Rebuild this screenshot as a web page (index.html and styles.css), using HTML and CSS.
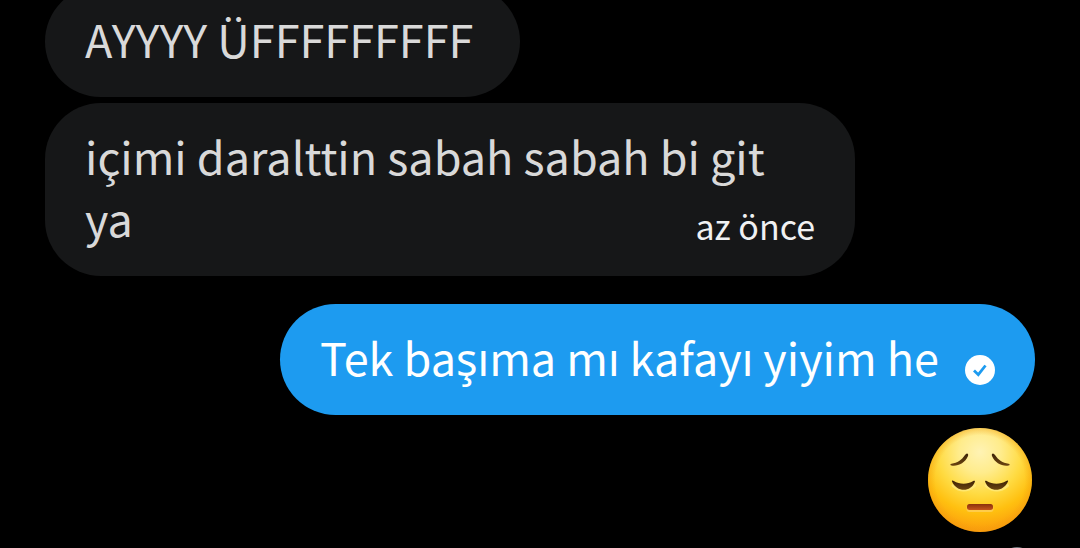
FILE: index.html
```
<!DOCTYPE html>
<html lang="tr">
<head>
  <meta charset="UTF-8">
  <meta name="viewport" content="width=device-width, initial-scale=1.0">
  <title>Mesajlar</title>
  <link rel="stylesheet" href="styles.css">
</head>
<body>
  <main class="chat">

    <!-- incoming -->
    <div class="bubble received">
      <p class="text">AYYYY ÜFFFFFFFFF</p>
    </div>
    <div class="bubble received last">
      <p class="text">içimi daralttin sabah sabah bi git ya <time class="time">az önce</time></p>
    </div>

    <!-- outgoing -->
    <div class="bubble sent">
      <p class="text">Tek başıma mı kafayı yiyim he</p>
      <svg class="status" viewBox="0 0 30 30" role="img" aria-label="Gönderildi">
        <circle cx="15" cy="15" r="15" fill="#fff"/>
        <path d="M9 15.500l4.300 4.200L20.500 10.500" fill="none" stroke="#1d9bf0" stroke-width="2.800"/>
      </svg>
    </div>

    <div class="sticker">
      <svg class="emoji" viewBox="0 0 104 104" role="img" aria-label="Düşünceli yüz">
        <defs>
          <radialGradient id="face" cx="52" cy="24" r="84" gradientUnits="userSpaceOnUse">
            <stop offset="0" stop-color="#fff3b4"/>
            <stop offset=".25" stop-color="#ffec8c"/>
            <stop offset=".5" stop-color="#ffdb42"/>
            <stop offset=".72" stop-color="#ffc010"/>
            <stop offset="1" stop-color="#fb930a"/>
          </radialGradient>
          <radialGradient id="rim" cx="52" cy="52" r="52" gradientUnits="userSpaceOnUse">
            <stop offset=".86" stop-color="#f09a10" stop-opacity="0"/>
            <stop offset="1" stop-color="#f09a10" stop-opacity=".4"/>
          </radialGradient>
          <linearGradient id="mouth" x1="0" y1="0" x2="0" y2="1">
            <stop offset="0" stop-color="#8a300c"/>
            <stop offset="1" stop-color="#c4531c"/>
          </linearGradient>
          <linearGradient id="lid" x1="0" y1="0" x2="0" y2="1">
            <stop offset="0" stop-color="#3c2206"/>
            <stop offset="1" stop-color="#6b4410"/>
          </linearGradient>
        </defs>
        <circle cx="52" cy="52" r="52" fill="url(#face)"/>
        <circle cx="52" cy="52" r="52" fill="url(#rim)"/>
        <!-- lower lid highlights -->
        <path d="M25 57.500q10.500 9 21.500 0M58 57.500q11 9 21.500 0" fill="none" stroke="#ffed85" stroke-opacity=".7" stroke-width="3" stroke-linecap="round"/>
        <g fill="url(#lid)">
          <path d="M39 25.500c1 0 1.500 1 1 2.500-3 7-10 10.500-16.500 9.500-1.500-.3-1.500-1.500 0-1.800 6-1 10-3.500 13.500-8.700.7-1 1.300-1.500 2-1.500z"/>
          <path d="M65 25.500c-1 0-1.500 1-1 2.500 3 7 10 10.500 16.500 9.500 1.500-.3 1.500-1.500 0-1.800-6-1-10-3.500-13.500-8.700-.7-1-1.300-1.500-2-1.500z"/>
          <path d="M24 53.500c-.4-1.300.8-1.300 1.800-.5 6 3.500 13.500 3.500 19.500 0 1-.7 2-.3 1.500 1-4 10.500-18 10.500-22.800-.5z"/>
          <path d="M80 53.500c.4-1.300-.8-1.300-1.800-.5-6 3.500-13.500 3.500-19.500 0-1-.7-2-.3-1.500 1 4 10.500 18 10.500 22.800-.5z"/>
        </g>
        <rect x="38.500" y="77" width="27" height="7" rx="3" fill="#ffcc4a"/>
        <rect x="39" y="76" width="26" height="6" rx="2.500" fill="url(#mouth)"/>
      </svg>
      <svg class="status" viewBox="0 0 30 30" role="img" aria-label="Gönderildi">
        <circle cx="15" cy="15" r="15" fill="#71767b"/>
        <path d="M9 15.500l4.300 4.200L20.500 10.500" fill="none" stroke="#000" stroke-width="2.800"/>
      </svg>
    </div>

  </main>
</body>
</html>
```
FILE: styles.css
```
* {
  margin: 0;
  padding: 0;
  box-sizing: border-box;
}

body {
  background: #000;
  font-family: "Noto Sans CJK JP", "Noto Sans", sans-serif;
  height: 100vh;
  overflow: hidden;
}

/* list is scrolled, the first bubble is partly off screen */
.chat {
  display: flex;
  flex-direction: column;
  gap: 6px;
  padding: 0 45px;
  margin-top: -14px;
}

.bubble {
  display: flex;
  align-items: flex-end;
  padding: 22px 40px 27px;
  border-radius: 56px;
}

.received {
  align-self: flex-start;
  min-width: 48%;
  max-width: 75vw;
  background: #161718;
  color: #d9d9d9;
}

.last {
  margin-bottom: 22px;
}

.sent {
  align-self: flex-end;
  background: #1d9bf0;
  color: #fff;
  gap: 26px;
}

.text {
  font-size: 45px;
  line-height: 62px;
}

/* shares the last line of the message */
.time {
  float: right;
  margin-top: 16px;
  color: #f0f1f2;
  font-size: 34px;
  line-height: 46px;
}

.status {
  flex-shrink: 0;
  width: 30px;
  height: 30px;
  margin-bottom: 3px;
}

.sticker {
  display: flex;
  flex-direction: column;
  align-items: flex-end;
  gap: 15px;
  padding: 7px 3px 0;
}

.emoji {
  width: 104px;
  height: 104px;
}
```
